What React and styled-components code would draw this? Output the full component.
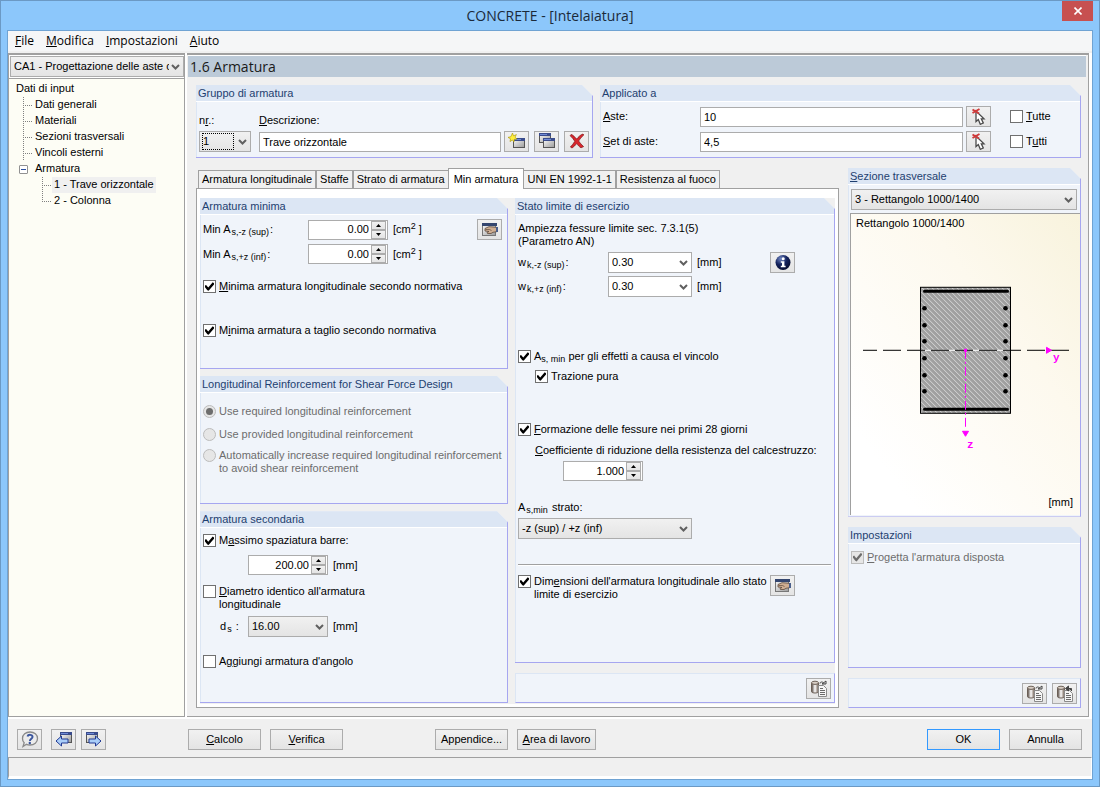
import React from 'react'
import styled, { createGlobalStyle, css } from 'styled-components'

const GlobalStyle = createGlobalStyle`
  * {
    box-sizing: border-box;
  }

  body {
    margin: 0;
    font-family: 'Liberation Sans', Arial, sans-serif;
    font-size: 11px;
    line-height: 13px;
    color: #000;
  }

  button,
  input,
  select {
    margin: 0;
    font: inherit;
    color: inherit;
  }
`

const grey = '#a0a0a0'
const face = '#f0f0f0'
const control = '#acacac'

/* Window frame */

const Window = styled.div`
  display: flex;
  flex-direction: column;
  min-height: 100vh;
  padding: 0 6px 6px;
  border: 1px solid #6b99c4;
  background: #8cc7fb;
`

const TitleBar = styled.header`
  display: grid;
  grid-template-columns: 1fr auto 1fr;
  align-items: start;
  height: 29px;
`

const WindowTitle = styled.h1`
  grid-column: 2;
  margin: 0;
  font: 400 14px/29px 'Open Sans', 'Noto Sans', sans-serif;
  color: #1b2a3a;
`

const CloseButton = styled.button`
  justify-self: end;
  display: grid;
  place-items: center;
  width: 31px;
  height: 20px;
  padding: 0;
  border: none;
  background: #c75050;
`

const Client = styled.div`
  display: flex;
  flex-direction: column;
  flex: 1;
  border: 1px solid #6fa3d3;
  background: ${face};
`

const MenuBar = styled.nav`
  display: flex;
  gap: 12px;
  height: 22px;
  padding: 0 7px;
  border-bottom: 2px solid ${face};
  background: #f5f6f7;
`

const MenuItem = styled.a`
  font: 400 12px/20px 'Open Sans', 'Noto Sans', sans-serif;
  color: #000;
  text-decoration: none;
`

const Body = styled.div`
  display: grid;
  grid-template-columns: 177px minmax(0, 1fr);
  gap: 2px;
  flex: 1;
  border-bottom: 2px solid #fff;
  background: #fff;
`

/* Controls */

const buttonFace = css`
  border: 1px solid ${control};
  background: linear-gradient(#f1f1f1, #e4e4e4);
`

const PushButton = styled.button`
  width: ${({ $wide }) => ($wide ? 79 : 73)}px;
  height: 21px;
  padding: 0;
  ${buttonFace}
  border-color: ${({ $primary }) => ($primary ? '#3399ff' : control)};
  white-space: nowrap;
`

const IconButton = styled.button`
  display: grid;
  place-items: center;
  flex: none;
  width: 25px;
  height: 21px;
  padding: 0;
  ${buttonFace}
`

const TextBox = styled.input`
  width: 100%;
  min-width: 0;
  height: 20px;
  padding: 0 3px;
  border: 1px solid ${control};
  background: #fff;
  outline: none;
`

const SelectBox = styled.span`
  display: inline-grid;
  align-items: center;
  flex: none;
  width: ${({ $width }) => $width || '100%'};
  height: 21px;

  select,
  svg,
  &::after {
    grid-area: 1 / 1;
  }

  select {
    appearance: none;
    width: 100%;
    height: 100%;
    padding: 0 14px 0 3px;
    border-radius: 0;
    outline: none;
    ${buttonFace}
    ${({ $white }) => $white && 'background: #fff;'}
  }

  svg {
    justify-self: end;
    margin-right: 4px;
    pointer-events: none;
  }

  ${({ $focused }) =>
    $focused &&
    css`
      &::after {
        content: '';
        justify-self: start;
        width: 30px;
        height: 15px;
        margin-left: 3px;
        border: 1px dotted #000;
        pointer-events: none;
      }
    `}
`

const SpinBox = styled.span`
  display: inline-flex;
  flex: none;
  width: 80px;
  height: 20px;
  border: 1px solid ${control};
  background: #fff;

  input {
    flex: 1;
    min-width: 0;
    padding: 0 2px 0 0;
    border: none;
    background: none;
    text-align: right;
    outline: none;
  }
`

const SpinButtons = styled.span`
  display: grid;
  grid-template-rows: 1fr 1fr;
  width: 16px;
  padding-right: 1px;

  button {
    display: grid;
    place-items: center;
    padding: 0;
    ${buttonFace}
  }
`

const CheckLabel = styled.label`
  display: flex;
  align-items: flex-start;
  gap: 3px;
  width: ${({ $width }) => $width || 'auto'};
  color: ${({ $disabled }) => ($disabled ? '#6d6d6d' : '#000')};
  white-space: nowrap;
`

const CheckInput = styled.input`
  appearance: none;
  display: grid;
  place-items: center;
  flex: none;
  width: 13px;
  height: 13px;
  border: 1px solid #707070;
  background: #fff;

  &:checked::before {
    content: '';
    width: 9px;
    height: 9px;
    background: #000;
    clip-path: polygon(0 40%, 12% 32%, 36% 62%, 86% 4%, 100% 14%, 100% 28%, 40% 98%, 26% 92%, 0 58%);
  }

  &:disabled {
    border-color: #bcbcbc;
    background: #e6e6e6;
  }

  &:disabled:checked::before {
    background: #6d6d6d;
  }
`

const RadioInput = styled(CheckInput)`
  border-radius: 50%;

  &:checked::before {
    width: 7px;
    height: 7px;
    border-radius: 50%;
    clip-path: none;
  }
`

/* Left pane */

const TreePane = styled.aside`
  display: flex;
  flex-direction: column;
  border: 1px solid ${grey};
  border-top-width: 2px;
  background: #fff;
`

const CaseSelect = styled.div`
  display: flex;
  padding: 1px 0 1px 1px;
  border-bottom: 1px solid ${grey};
`

const Tree = styled.ul`
  flex: 1;
  margin: 0;
  padding: 2px 0 0 7px;
  list-style: none;
  background: #fdfdf5;
`

const TreeRow = styled.li`
  display: flex;
  align-items: center;
  height: 16px;
  padding-left: ${({ $level }) => ($level ? $level * 19 - 12 : 0)}px;
  white-space: nowrap;
`

const TreeLabel = styled.span`
  padding: 1px 2px 2px;
  ${({ $level }) => !$level && 'padding-left: 0;'}
  background: ${({ $selected }) => ($selected ? '#f0f0f0' : 'none')};
`

const Guide = styled.span`
  width: 10px;
  height: 16px;
  background:
    repeating-linear-gradient(to bottom, #808080 0 1px, transparent 1px 2px) left top / 1px
      ${({ $last }) => ($last ? '50%' : '100%')} no-repeat,
    repeating-linear-gradient(to right, #808080 0 1px, transparent 1px 2px) left center / 100% 1px
      no-repeat;
`

const Toggle = styled.button`
  display: grid;
  place-items: center;
  width: 9px;
  height: 9px;
  margin: 0 5px 0 -4px;
  padding: 0;
  border: 1px solid #919191;
  border-radius: 1px;
  background: #fff;
`

/* Right pane */

const MainPane = styled.main`
  display: flex;
  flex-direction: column;
  margin-right: 3px;
  border: solid ${grey};
  border-width: 2px 1px 1px 0;
  background: ${face};
`

const PaneTitle = styled.h2`
  height: 22px;
  margin: 0 2px 0 1px;
  padding-left: 2px;
  border-top: 1px solid #fff;
  font: 400 14px/21px 'Open Sans', 'Noto Sans', sans-serif;
  color: #1a1a1a;
  background: #bccad8;
`

const PaneContent = styled.div`
  display: flex;
  flex-direction: column;
  flex: 1;
  gap: 10px;
  padding: 8px 7px 8px 9px;
`

const TopRow = styled.div`
  display: grid;
  grid-template-columns: 397fr 481fr;
  gap: 7px;
`

const LowerRow = styled.div`
  display: grid;
  grid-template-columns: minmax(0, 1fr) 233px;
  gap: 9px;
  flex: 1;
`

const GroupBox = styled.section`
  display: flex;
  flex-direction: column;
  flex: ${({ $share }) => $share || 1} 1 0;
  min-height: min-content;
  border: solid #a6a6f0;
  border-width: 0 1px 1px 0;
  background: #f0f4fa;
  clip-path: polygon(0 0, calc(100% - 11px) 0, 100% 11px, 100% 100%, 0 100%);
`

const GroupTitle = styled.h3`
  height: 17px;
  margin: 0;
  padding-left: 2px;
  border-bottom: 1px solid #fff;
  font-size: 11px;
  font-weight: 400;
  line-height: 16px;
  color: #1e3f70;
  background: #dce6f4;
`

const GroupBody = styled.div`
  display: flex;
  flex-direction: column;
  flex: 1;
  padding: ${({ $top }) => $top || 4}px 3px 4px 2px;
  border-left: 1px solid #dce6f4;
`

const ActionStrip = styled.div`
  display: flex;
  align-items: center;
  justify-content: flex-end;
  gap: 5px;
  height: 30px;
  padding-right: 3px;
  border: 1px solid #a6a6f0;
  border-top-color: #dce6f4;
  border-left-color: #dce6f4;
  background: #f0f4fa;
`

const Row = styled.div`
  display: flex;
  align-items: ${({ $align }) => $align || 'center'};
  gap: 5px;
  margin-top: ${({ $top }) => $top || 0}px;
  padding-left: ${({ $indent }) => $indent || 0}px;
`

const FieldLabel = styled.label`
  flex: none;
  width: ${({ $width }) => $width}px;
  white-space: nowrap;

  sub {
    font-size: 9px;
    line-height: 0;
    vertical-align: -2px;
    margin: 0 1px;
  }
`

const Unit = styled.span`
  width: ${({ $width }) => $width || 68}px;

  sup {
    font-size: 9px;
    line-height: 0;
    vertical-align: 4px;
  }
`

const Sub = styled.sub`
  font-size: 9px;
  line-height: 0;
  vertical-align: -2px;
`

const Note = styled.p`
  margin: 3px 0 0;
`

const Divider = styled.hr`
  width: 100%;
  margin: 25px 0 9px;
  border: solid;
  border-width: 1px 0;
  border-color: ${grey} transparent #fff;
`

const GroupFields = styled.div`
  display: grid;
  grid-template-columns: 52px minmax(0, 1fr) auto;
  gap: 4px 8px;
  align-items: center;
  padding: 8px 0 1px;

  label:last-of-type {
    grid-column: 2 / 4;
  }
`

const ToolButtons = styled.div`
  display: flex;
  gap: 5px;
  margin-left: -5px;
`

const ApplyFields = styled.div`
  display: grid;
  grid-template-columns: 94px minmax(0, 1fr) 25px 83px;
  gap: 4px 3px;
  align-items: center;
`

const ApplyCheck = styled(CheckLabel)`
  padding-left: 16px;
`

/* Tabs */

const TabArea = styled.div`
  display: flex;
  flex-direction: column;
`

const TabList = styled.div`
  display: flex;
  align-items: flex-end;
  height: 20px;
  padding-left: 2px;
`

const Tab = styled.button`
  height: ${({ $active }) => ($active ? 21 : 18)}px;
  padding: 0 ${({ $active }) => ($active ? 5 : 3)}px;
  border: 1px solid ${grey};
  border-bottom: none;
  margin: 0 ${({ $active }) => ($active ? '-1px -1px -1px' : '0 0 0')};
  z-index: ${({ $active }) => ($active ? 1 : 0)};
  background: ${({ $active }) => ($active ? '#fff' : face)};
  white-space: nowrap;
`

const TabPanel = styled.div`
  display: grid;
  flex: 1;
  padding: 9px 3px 3px 3px;
  border: 1px solid ${grey};
  background: #fff;
`

const TabPage = styled.div`
  display: grid;
  grid-template-columns: minmax(0, 308fr) minmax(0, 320fr);
  gap: 7px;
  padding-bottom: 1px;
  background: ${face};
`

const Column = styled.div`
  display: flex;
  flex-direction: column;
  gap: ${({ $gap }) => $gap || 7}px;
`

/* Cross section */

const SectionFrame = styled.figure`
  display: flex;
  flex-direction: column;
  flex: 1;
  margin: 3px -3px -3px -1px;
  padding: 3px 7px 6px 5px;
  border: solid ${grey};
  border-width: 1px 0 0 1px;
  background: linear-gradient(to top right, #fff 15%, #fdf9ee 65%, #f8f3dd);

  svg {
    flex: 1;
    width: 100%;
    min-height: 200px;
  }
`

const SectionName = styled.figcaption`
  height: 14px;
`

const SectionUnit = styled.span`
  align-self: flex-end;
`

/* Bottom */

const CommandBar = styled.footer`
  display: flex;
  align-items: center;
  gap: 9px;
  height: 38px;
  padding: 2px 10px 0 9px;
`

const NavButtons = styled.div`
  display: flex;
  gap: 5px;
  width: 162px;

  button:first-child {
    margin-right: 4px;
  }
`

const ButtonPair = styled.div`
  display: flex;
  gap: 9px;
  margin-left: ${({ $push }) => $push};
`

const StatusBar = styled.div`
  height: 22px;
  border: solid;
  border-width: 1px 1px 3px;
  border-color: ${grey} #fff #fff ${grey};
`

/* Icons */

const Chevron = () => (
  <svg width="9" height="6" viewBox="0 0 9 6" fill="none" stroke="#606060" strokeWidth="2">
    <path d="M1 1l3.5 3.5L8 1" />
  </svg>
)

const MiniWindow = ({ x, y, width = 11, height = 9 }) => (
  <g>
    <rect x={x + 0.5} y={y + 0.5} width={width} height={height} fill="url(#pane)" stroke="#555" />
    <rect x={x} y={y} width={width + 1} height="3" fill="#3a4c8c" />
    <path d={`M${x + 1} ${y + 1.5}h${width - 4}`} stroke="#6f8ad6" />
  </g>
)

const IconDefs = () => (
  <svg width="0" height="0" display="block" aria-hidden="true">
    <defs>
      <linearGradient id="pane" x1="0" y1="0" x2="1" y2="1">
        <stop offset="0" stopColor="#fff" />
        <stop offset="1" stopColor="#9a9a9a" />
      </linearGradient>
      <linearGradient id="drum">
        <stop offset="0" stopColor="#4d4038" />
        <stop offset=".5" stopColor="#fff" />
        <stop offset="1" stopColor="#6b5a4e" />
      </linearGradient>
      <radialGradient id="ball" cx=".35" cy=".25" r=".8">
        <stop offset="0" stopColor="#7288c4" />
        <stop offset=".5" stopColor="#14235e" />
        <stop offset="1" stopColor="#060b2c" />
      </radialGradient>
    </defs>
  </svg>
)

const Icon = ({ children, ...props }) => (
  <svg width="18" height="17" viewBox="0 0 18 17" aria-hidden="true" {...props}>
    {children}
  </svg>
)

const NewIcon = () => (
  <Icon>
    <MiniWindow x={5} y={5} />
    <path
      d="M4.5 0l1 2.8L8.4 1.6 7 4.2l2 1.8-2.8.3L6 9 4.4 7 2 8.6l.5-2.8L0 4.4l2.8-.7z"
      fill="#ffee3c"
      stroke="#a79300"
      strokeWidth=".6"
    />
  </Icon>
)

const DuplicateIcon = () => (
  <Icon>
    <MiniWindow x={1} y={0} />
    <MiniWindow x={5} y={5} />
  </Icon>
)

const DeleteIcon = () => (
  <Icon>
    <path
      d="M3 1.500c2 .2 3.800 2.600 5.600 4.600C10.400 4 12.500 1.600 15 1l.8 1C13.800 3.600 12 5.800 10.600 8c1.600 2 3 3.900 5 5.600l-2.600 1.200C11 13.600 9.800 12 8.600 10.600 7.200 12.200 6 14 4 15l-1.600-1C4.200 12.300 5.600 10.300 6.800 8.300 5.400 6.200 4 4.200 2.200 2.800z"
      fill="#d8262c"
      stroke="#7e1216"
      strokeWidth=".7"
    />
  </Icon>
)

const PickIcon = () => (
  <Icon>
    <path
      d="M6 3v10.500l2.300-2 2 4.800 3-1.300-2-4.200H14z"
      fill="#fff"
      stroke="#4a4a4a"
      strokeWidth="1.300"
    />
    <path d="M2.500 1.500l6.500 4M9.500 1L2.500 5" stroke="#cf3a3a" strokeWidth="2" />
  </Icon>
)

const HandIcon = () => (
  <Icon>
    <rect x="1.500" y="2.500" width="13" height="12" fill="url(#pane)" stroke="#777" />
    <rect x="1" y="2" width="15" height="3" fill="#34466f" />
    <path
      d="M4 7.500l4-1.800 4 .3 4.500.5v4l-4.500.8-2 1.200H6.500l-.5-1.200 2-.8L4 10z"
      fill="#cfae92"
      stroke="#5e4a3c"
      strokeWidth=".8"
    />
    <path d="M4.500 8.500h4l2 1" stroke="#5e4a3c" strokeWidth=".7" fill="none" />
    <rect x="15" y="6" width="2" height="5" fill="#4a5f8c" />
  </Icon>
)

const InfoIcon = () => (
  <Icon>
    <circle cx="9" cy="8.500" r="7.500" fill="url(#ball)" />
    <circle cx="9.200" cy="4.700" r="1.500" fill="#fff" />
    <path d="M6.800 7.300h3.600v4.500h1.200v1.400H6.800v-1.400H8V8.700H6.800z" fill="#fff" />
  </Icon>
)

const LibraryIcon = ({ out }) => (
  <Icon>
    <path d="M1.500 3v8.500c0 2 7 2 7 0V3z" fill="url(#drum)" stroke="#6b5f56" />
    <ellipse cx="5" cy="2.800" rx="3.500" ry="1.600" fill="#d9cfc6" stroke="#6b5f56" />
    <path d="M8.500 5.500h5l3 3v8h-8z" fill="#f6f6f6" stroke="#8a8a8a" />
    <path d="M10 8.500h3M10 10.500h5M10 12.500h5M10 14.500h5" stroke="#6a6a6a" />
    {out ? (
      <path d="M15.500 6V3.500H12M12.500 1L9.500 3.500l3 2.500z" fill="#444" stroke="#444" />
    ) : (
      <path d="M10 3.500c0-2 3-2 4 0M12 4h4V1z" fill="none" stroke="#444" />
    )}
  </Icon>
)

const HelpIcon = () => (
  <Icon>
    <path
      d="M9 1c4.300 0 7.500 2.600 7.500 6.500S13.300 14 9 14c-1.300 0-2.500-.2-3.500-.7L2 15.500l1.200-3.800A5.800 5.800 0 0 1 1.500 7.500C1.500 3.600 4.700 1 9 1z"
      fill="#ececec"
      stroke="#8a8a8a"
      strokeWidth="1.300"
    />
    <path
      d="M6.500 5.500C7 3.300 11.800 3.200 11.500 6c-.2 1.700-2.600 1.800-2.600 4"
      fill="none"
      stroke="#3c569e"
      strokeWidth="2"
    />
    <circle cx="8.800" cy="12" r="1.200" fill="#3c569e" />
  </Icon>
)

const ArrowIcon = ({ back }) => (
  <Icon>
    <MiniWindow x={back ? 5 : 1} y={1} height={10} />
    <path
      d="M1 10l5.500-5V8H13v4H6.500v3z"
      transform={back ? undefined : 'translate(17 0) scale(-1 1)'}
      fill="#a9cdf8"
      stroke="#223a94"
    />
  </Icon>
)

const SpinArrow = ({ down }) => (
  <svg width="5" height="3" viewBox="0 0 5 3">
    <path d={down ? 'M0 0h5L2.500 3z' : 'M0 3h5L2.500 0z'} />
  </svg>
)

/* Composed parts */

const Spin = ({ id, value, label }) => (
  <SpinBox>
    <input id={id} type="text" defaultValue={value} aria-label={label} />
    <SpinButtons>
      <button aria-label="Su">
        <SpinArrow />
      </button>
      <button aria-label="Giù">
        <SpinArrow down />
      </button>
    </SpinButtons>
  </SpinBox>
)

const Select = ({ id, value, label, width, white, focused }) => (
  <SelectBox $width={width} $white={white} $focused={focused}>
    <select id={id} aria-label={label}>
      <option>{value}</option>
    </select>
    <Chevron />
  </SelectBox>
)

const Check = ({ children, checked, disabled, width }) => (
  <CheckLabel $disabled={disabled} $width={width}>
    <CheckInput type="checkbox" defaultChecked={checked} disabled={disabled} />
    <span>{children}</span>
  </CheckLabel>
)

const Radio = ({ children, checked }) => (
  <CheckLabel $disabled>
    <RadioInput type="radio" name="shear" defaultChecked={checked} disabled />
    <span>{children}</span>
  </CheckLabel>
)

const Group = ({ title, share, top, children }) => (
  <GroupBox $share={share}>
    <GroupTitle>{title}</GroupTitle>
    <GroupBody $top={top}>{children}</GroupBody>
  </GroupBox>
)

const treeItems = [
  { text: 'Dati di input', level: 0 },
  { text: 'Dati generali', level: 1 },
  { text: 'Materiali', level: 1 },
  { text: 'Sezioni trasversali', level: 1 },
  { text: 'Vincoli esterni', level: 1 },
  { text: 'Armatura', level: 1, open: true },
  { text: '1 - Trave orizzontale', level: 2, selected: true },
  { text: '2 - Colonna', level: 2, last: true },
]

const tabs = [
  'Armatura longitudinale',
  'Staffe',
  'Strato di armatura',
  'Min armatura',
  'UNI EN 1992-1-1',
  'Resistenza al fuoco',
]

const barRows = [76, 93, 109, 126, 143, 159]

const CrossSection = () => (
  <svg viewBox="0 0 217 263" role="img" aria-label="Rettangolo 1000/1400">
    <defs>
      <pattern id="hatch" width="5" height="5" patternUnits="userSpaceOnUse">
        <rect width="5" height="5" fill="#a0a0a0" />
        <path d="M-1 -1l7 7M-1 4l2 2M4 -1l2 2" stroke="#dcdcdc" strokeWidth=".9" />
      </pattern>
    </defs>
    <g transform="translate(-5 0)">
      <rect x="69.500" y="55.500" width="90" height="126" fill="url(#hatch)" stroke="#000" />
      <path d="M73.500 59.500h83M73.500 177.500h83" stroke="#000" strokeWidth="3" strokeLinecap="round" />
      {barRows.map((y) => (
        <g key={y}>
          <circle cx="73.500" cy={y + 0.5} r="2.300" />
          <circle cx="154.500" cy={y + 0.5} r="2.300" />
        </g>
      ))}
      <path d="M70 118.500h89" stroke="#fff" />
      <path d="M12 118.500h206" stroke="#000" strokeDasharray="18 6" strokeDashoffset="4" />
      <g stroke="#f0f" fill="#f0f">
        <path d="M114.500 118v79" strokeDasharray="9 3 2 3" fill="none" />
        <rect x="113.500" y="117.500" width="2" height="2" />
        <path d="M195.500 115.500l5 3-5 3zM111.500 199.500h6l-3 5z" />
      </g>
      <g fill="#f0f" fontFamily="Liberation Mono, monospace" fontSize="11" fontWeight="700">
        <text x="202" y="129">
          y
        </text>
        <text x="116" y="216">
          z
        </text>
      </g>
    </g>
  </svg>
)

const MinimumReinforcement = () => (
  <Group title="Armatura minima" share={171}>
    <Row>
      <FieldLabel htmlFor="minSup" $width={100}>
        Min A<sub>s,-z (sup)</sub>:
      </FieldLabel>
      <Spin id="minSup" value="0.00" />
      <Unit $width={79}>
        [cm<sup>2</sup> ]
      </Unit>
      <IconButton aria-label="Dettagli">
        <HandIcon />
      </IconButton>
    </Row>
    <Row $top={4}>
      <FieldLabel htmlFor="minInf" $width={100}>
        Min A<sub>s,+z (inf)</sub>:
      </FieldLabel>
      <Spin id="minInf" value="0.00" />
      <Unit>
        [cm<sup>2</sup> ]
      </Unit>
    </Row>
    <Row $top={16}>
      <Check checked>
        <u>M</u>inima armatura longitudinale secondo normativa
      </Check>
    </Row>
    <Row $top={31}>
      <Check checked>
        M<u>i</u>nima armatura a taglio secondo normativa
      </Check>
    </Row>
  </Group>
)

const ShearDesign = () => (
  <Group title="Longitudinal Reinforcement for Shear Force Design" share={128} top={12}>
    <Row>
      <Radio checked>Use required longitudinal reinforcement</Radio>
    </Row>
    <Row $top={10}>
      <Radio>Use provided longitudinal reinforcement</Radio>
    </Row>
    <Row $top={8}>
      <Radio>
        Automatically increase required longitudinal reinforcement
        <br />
        to avoid shear reinforcement
      </Radio>
    </Row>
  </Group>
)

const SecondaryReinforcement = () => (
  <Group title="Armatura secondaria" share={192} top={6}>
    <Row>
      <Check checked>
        M<u>a</u>ssimo spaziatura barre:
      </Check>
    </Row>
    <Row $top={8} $indent={45}>
      <Spin value="200.00" label="Massimo spaziatura barre" />
      <Unit>[mm]</Unit>
    </Row>
    <Row $top={10}>
      <Check>
        <u>D</u>iametro identico all'armatura
        <br />
        longitudinale
      </Check>
    </Row>
    <Row $top={5} $indent={17}>
      <FieldLabel htmlFor="diameter" $width={23}>
        d<sub>s</sub> :
      </FieldLabel>
      <Select id="diameter" value="16.00" width="80px" />
      <Unit>[mm]</Unit>
    </Row>
    <Row $top={18}>
      <Check>
        A<u>g</u>giungi armatura d'angolo
      </Check>
    </Row>
  </Group>
)

const Serviceability = () => (
  <Group title="Stato limite di esercizio" share={465}>
    <Note>
      Ampiezza fessure limite sec. 7.3.1(5)
      <br />
      (Parametro AN)
    </Note>
    <Row $top={4}>
      <FieldLabel htmlFor="wSup" $width={85}>
        w<sub>k,-z (sup)</sub>:
      </FieldLabel>
      <Select id="wSup" value="0.30" width="84px" white />
      <Unit>[mm]</Unit>
      <IconButton aria-label="Informazioni">
        <InfoIcon />
      </IconButton>
    </Row>
    <Row $top={3}>
      <FieldLabel htmlFor="wInf" $width={85}>
        w<sub>k,+z (inf)</sub>:
      </FieldLabel>
      <Select id="wInf" value="0.30" width="84px" white />
      <Unit>[mm]</Unit>
    </Row>
    <Row $top={53}>
      <Check checked>
        A<Sub>s, min</Sub> per gli effetti a causa el vincolo
      </Check>
    </Row>
    <Row $top={7} $indent={17}>
      <Check checked>Trazione pura</Check>
    </Row>
    <Row $top={40}>
      <Check checked>
        <u>F</u>ormazione delle fessure nei primi 28 giorni
      </Check>
    </Row>
    <Row $top={8} $indent={17}>
      <label htmlFor="coefficient">
        <u>C</u>oefficiente di riduzione della resistenza del calcestruzzo:
      </label>
    </Row>
    <Row $top={4} $indent={45}>
      <Spin id="coefficient" value="1.000" />
    </Row>
    <Row $top={20}>
      <FieldLabel htmlFor="layer" $width={174}>
        A<sub>s,min</sub> strato:
      </FieldLabel>
    </Row>
    <Row $top={4}>
      <Select id="layer" value="-z (sup) / +z (inf)" width="174px" />
    </Row>
    <Divider />
    <Row $align="flex-start">
      <Check checked width="247px">
        Dim<u>e</u>nsioni dell'armatura longitudinale allo stato
        <br />
        limite di esercizio
      </Check>
      <IconButton aria-label="Impostazioni dettagliate">
        <HandIcon />
      </IconButton>
    </Row>
  </Group>
)

export default function App() {
  return (
    <Window>
      <GlobalStyle />
      <IconDefs />
      <TitleBar>
        <WindowTitle>CONCRETE - [Intelaiatura]</WindowTitle>
        <CloseButton aria-label="Chiudi">
          <svg width="8" height="8" viewBox="0 0 8 8" stroke="#fff" strokeWidth="1.600">
            <path d="M.5.5l7 7M7.500.5l-7 7" />
          </svg>
        </CloseButton>
      </TitleBar>

      <Client>
        <MenuBar>
          <MenuItem href="#file">
            <u>F</u>ile
          </MenuItem>
          <MenuItem href="#modifica">
            <u>M</u>odifica
          </MenuItem>
          <MenuItem href="#impostazioni">
            <u>I</u>mpostazioni
          </MenuItem>
          <MenuItem href="#aiuto">
            <u>A</u>iuto
          </MenuItem>
        </MenuBar>

        <Body>
          <TreePane>
            <CaseSelect>
              <Select label="Caso di progetto" value="CA1 - Progettazione delle aste c" />
            </CaseSelect>
            <Tree>
              {treeItems.map((item) => (
                <TreeRow key={item.text} $level={item.level}>
                  {item.open && (
                    <Toggle aria-label="Comprimi">
                      <svg width="5" height="1">
                        <path d="M0 .5h5" stroke="#2b4fa0" />
                      </svg>
                    </Toggle>
                  )}
                  {item.level > 0 && !item.open && <Guide $last={item.last} />}
                  <TreeLabel $level={item.level} $selected={item.selected}>
                    {item.text}
                  </TreeLabel>
                </TreeRow>
              ))}
            </Tree>
          </TreePane>

          <MainPane>
            <PaneTitle>1.6 Armatura</PaneTitle>
            <PaneContent>
              <TopRow>
                <Group title="Gruppo di armatura">
                  <GroupFields>
                    <label htmlFor="number">
                      n<u>r</u>.:
                    </label>
                    <label htmlFor="description">
                      <u>D</u>escrizione:
                    </label>
                    <Select id="number" value="1" width="52px" focused />
                    <TextBox id="description" defaultValue="Trave orizzontale" />
                    <ToolButtons>
                      <IconButton aria-label="Nuovo">
                        <NewIcon />
                      </IconButton>
                      <IconButton aria-label="Duplica">
                        <DuplicateIcon />
                      </IconButton>
                      <IconButton aria-label="Elimina">
                        <DeleteIcon />
                      </IconButton>
                    </ToolButtons>
                  </GroupFields>
                </Group>
                <Group title="Applicato a">
                  <ApplyFields>
                    <label htmlFor="members">
                      <u>A</u>ste:
                    </label>
                    <TextBox id="members" defaultValue="10" />
                    <IconButton aria-label="Seleziona aste">
                      <PickIcon />
                    </IconButton>
                    <ApplyCheck>
                      <CheckInput type="checkbox" />
                      <span>
                        <u>T</u>utte
                      </span>
                    </ApplyCheck>
                    <label htmlFor="sets">
                      <u>S</u>et di aste:
                    </label>
                    <TextBox id="sets" defaultValue="4,5" />
                    <IconButton aria-label="Seleziona set di aste">
                      <PickIcon />
                    </IconButton>
                    <ApplyCheck>
                      <CheckInput type="checkbox" />
                      <span>
                        T<u>u</u>tti
                      </span>
                    </ApplyCheck>
                  </ApplyFields>
                </Group>
              </TopRow>

              <LowerRow>
                <TabArea>
                  <TabList role="tablist">
                    {tabs.map((tab) => (
                      <Tab key={tab} role="tab" $active={tab === 'Min armatura'}>
                        {tab}
                      </Tab>
                    ))}
                  </TabList>
                  <TabPanel role="tabpanel">
                    <TabPage>
                      <Column>
                        <MinimumReinforcement />
                        <ShearDesign />
                        <SecondaryReinforcement />
                      </Column>
                      <Column $gap={10}>
                        <Serviceability />
                        <ActionStrip>
                          <IconButton aria-label="Libreria">
                            <LibraryIcon />
                          </IconButton>
                        </ActionStrip>
                      </Column>
                    </TabPage>
                  </TabPanel>
                </TabArea>

                <Column $gap={10}>
                  <Group
                    title={
                      <>
                        <u>S</u>ezione trasversale
                      </>
                    }
                    share={349}
                  >
                    <Select label="Sezione trasversale" value="3 - Rettangolo 1000/1400" />
                    <SectionFrame>
                      <SectionName>Rettangolo 1000/1400</SectionName>
                      <CrossSection />
                      <SectionUnit>[mm]</SectionUnit>
                    </SectionFrame>
                  </Group>
                  <Group title="Impostazioni" share={141} top={7}>
                    <Check checked disabled>
                      <u>P</u>rogetta l'armatura disposta
                    </Check>
                  </Group>
                  <ActionStrip>
                    <IconButton aria-label="Carica da libreria">
                      <LibraryIcon />
                    </IconButton>
                    <IconButton aria-label="Salva in libreria">
                      <LibraryIcon out />
                    </IconButton>
                  </ActionStrip>
                </Column>
              </LowerRow>
            </PaneContent>
          </MainPane>
        </Body>

        <CommandBar>
          <NavButtons>
            <IconButton aria-label="Guida">
              <HelpIcon />
            </IconButton>
            <IconButton aria-label="Indietro">
              <ArrowIcon back />
            </IconButton>
            <IconButton aria-label="Avanti">
              <ArrowIcon />
            </IconButton>
          </NavButtons>
          <ButtonPair>
            <PushButton>
              <u>C</u>alcolo
            </PushButton>
            <PushButton>
              <u>V</u>erifica
            </PushButton>
          </ButtonPair>
          <ButtonPair $push="83px">
            <PushButton>Appendice...</PushButton>
            <PushButton $wide>
              <u>A</u>rea di lavoro
            </PushButton>
          </ButtonPair>
          <ButtonPair $push="auto">
            <PushButton $primary>OK</PushButton>
            <PushButton>Annulla</PushButton>
          </ButtonPair>
        </CommandBar>
        <StatusBar />
      </Client>
    </Window>
  )
}
